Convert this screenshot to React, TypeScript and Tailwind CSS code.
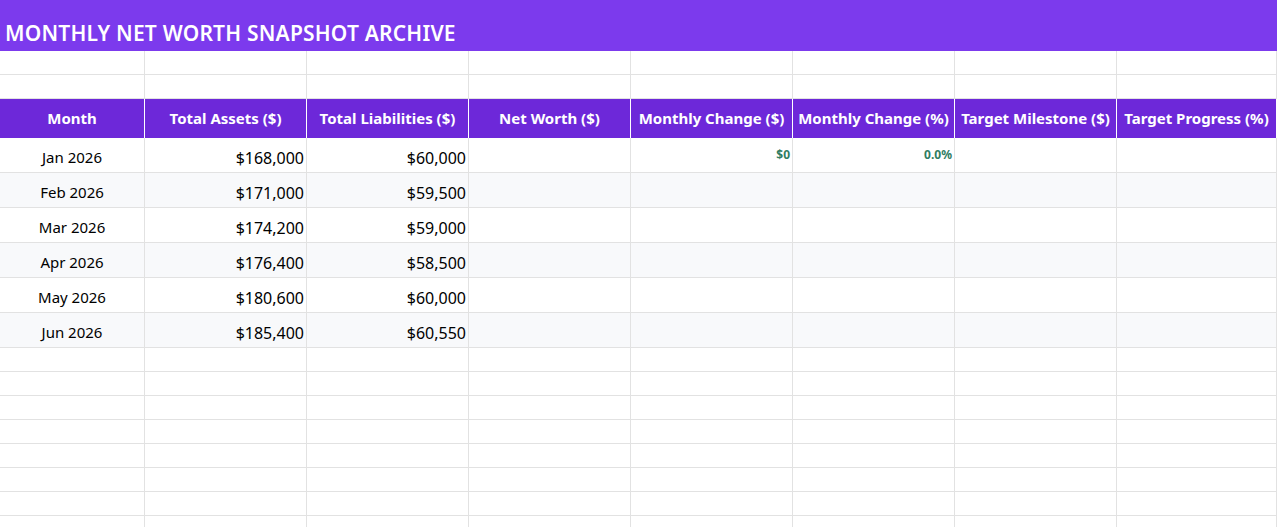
import React from 'react';

const cols = 'grid grid-cols-[145px_162px_162px_162px_162px_162px_162px_160px]';
const headers = ['Month', 'Total Assets ($)', 'Total Liabilities ($)', 'Net Worth ($)', 'Monthly Change ($)', 'Monthly Change (%)', 'Target Milestone ($)', 'Target Progress (%)'];
const rows = [
  ['Jan 2026', '$168,000', '$60,000'],
  ['Feb 2026', '$171,000', '$59,500'],
  ['Mar 2026', '$174,200', '$59,000'],
  ['Apr 2026', '$176,400', '$58,500'],
  ['May 2026', '$180,600', '$60,000'],
  ['Jun 2026', '$185,400', '$60,550'],
];

function EmptyRow({ h }: { h: string }) {
  return (
    <div className={cols}>
      {headers.map((_, i) => (
        <div key={i} className={`${h} border-r border-b border-[#e2e2e2]`} />
      ))}
    </div>
  );
}

export default function App() {
  return (
    <div className="w-[1277px] h-[527px] overflow-hidden bg-white font-['Lato',sans-serif] text-[15px] text-black">
      <div className="h-[51px] bg-[#7c3aed] flex items-end px-[5px] pb-[2px]">
        <span className="text-white text-[21px] font-semibold tracking-[0.2px]">MONTHLY NET WORTH SNAPSHOT ARCHIVE</span>
      </div>
      <EmptyRow h="h-[24px]" />
      <EmptyRow h="h-[24px]" />
      <div className={`${cols} bg-[#6d28d9]`}>
        {headers.map((t) => (
          <div key={t} className="h-[39px] border-r border-white flex items-center justify-center text-white font-bold text-[15px] whitespace-nowrap">
            {t}
          </div>
        ))}
      </div>
      {rows.map((r, ri) => (
        <div key={r[0]} className={`${cols} ${ri % 2 ? 'bg-[#f8f9fb]' : 'bg-white'}`}>
          <div className="h-[35px] border-r border-b border-[#e2e2e2] text-center pt-[8px]">{r[0]}</div>
          <div className="h-[35px] border-r border-b border-[#e2e2e2] flex items-end justify-end pr-[2px] pb-[2px] text-[16px]">{r[1]}</div>
          <div className="h-[35px] border-r border-b border-[#e2e2e2] flex items-end justify-end pr-[2px] pb-[2px] text-[16px]">{r[2]}</div>
          <div className="h-[35px] border-r border-b border-[#e2e2e2]" />
          <div className="h-[35px] border-r border-b border-[#e2e2e2] flex items-center justify-end pr-[2px] font-['Liberation_Serif',serif] font-bold text-[12px] text-[#2f7d62]">{ri === 0 ? '$0' : ''}</div>
          <div className="h-[35px] border-r border-b border-[#e2e2e2] flex items-center justify-end pr-[2px] font-['Liberation_Serif',serif] font-bold text-[12px] text-[#2f7d62]">{ri === 0 ? '0.0%' : ''}</div>
          <div className="h-[35px] border-r border-b border-[#e2e2e2]" />
          <div className="h-[35px] border-r border-b border-[#e2e2e2]" />
        </div>
      ))}
      {Array.from({ length: 8 }).map((_, i) => (
        <EmptyRow key={i} h="h-[24px]" />
      ))}
    </div>
  );
}
